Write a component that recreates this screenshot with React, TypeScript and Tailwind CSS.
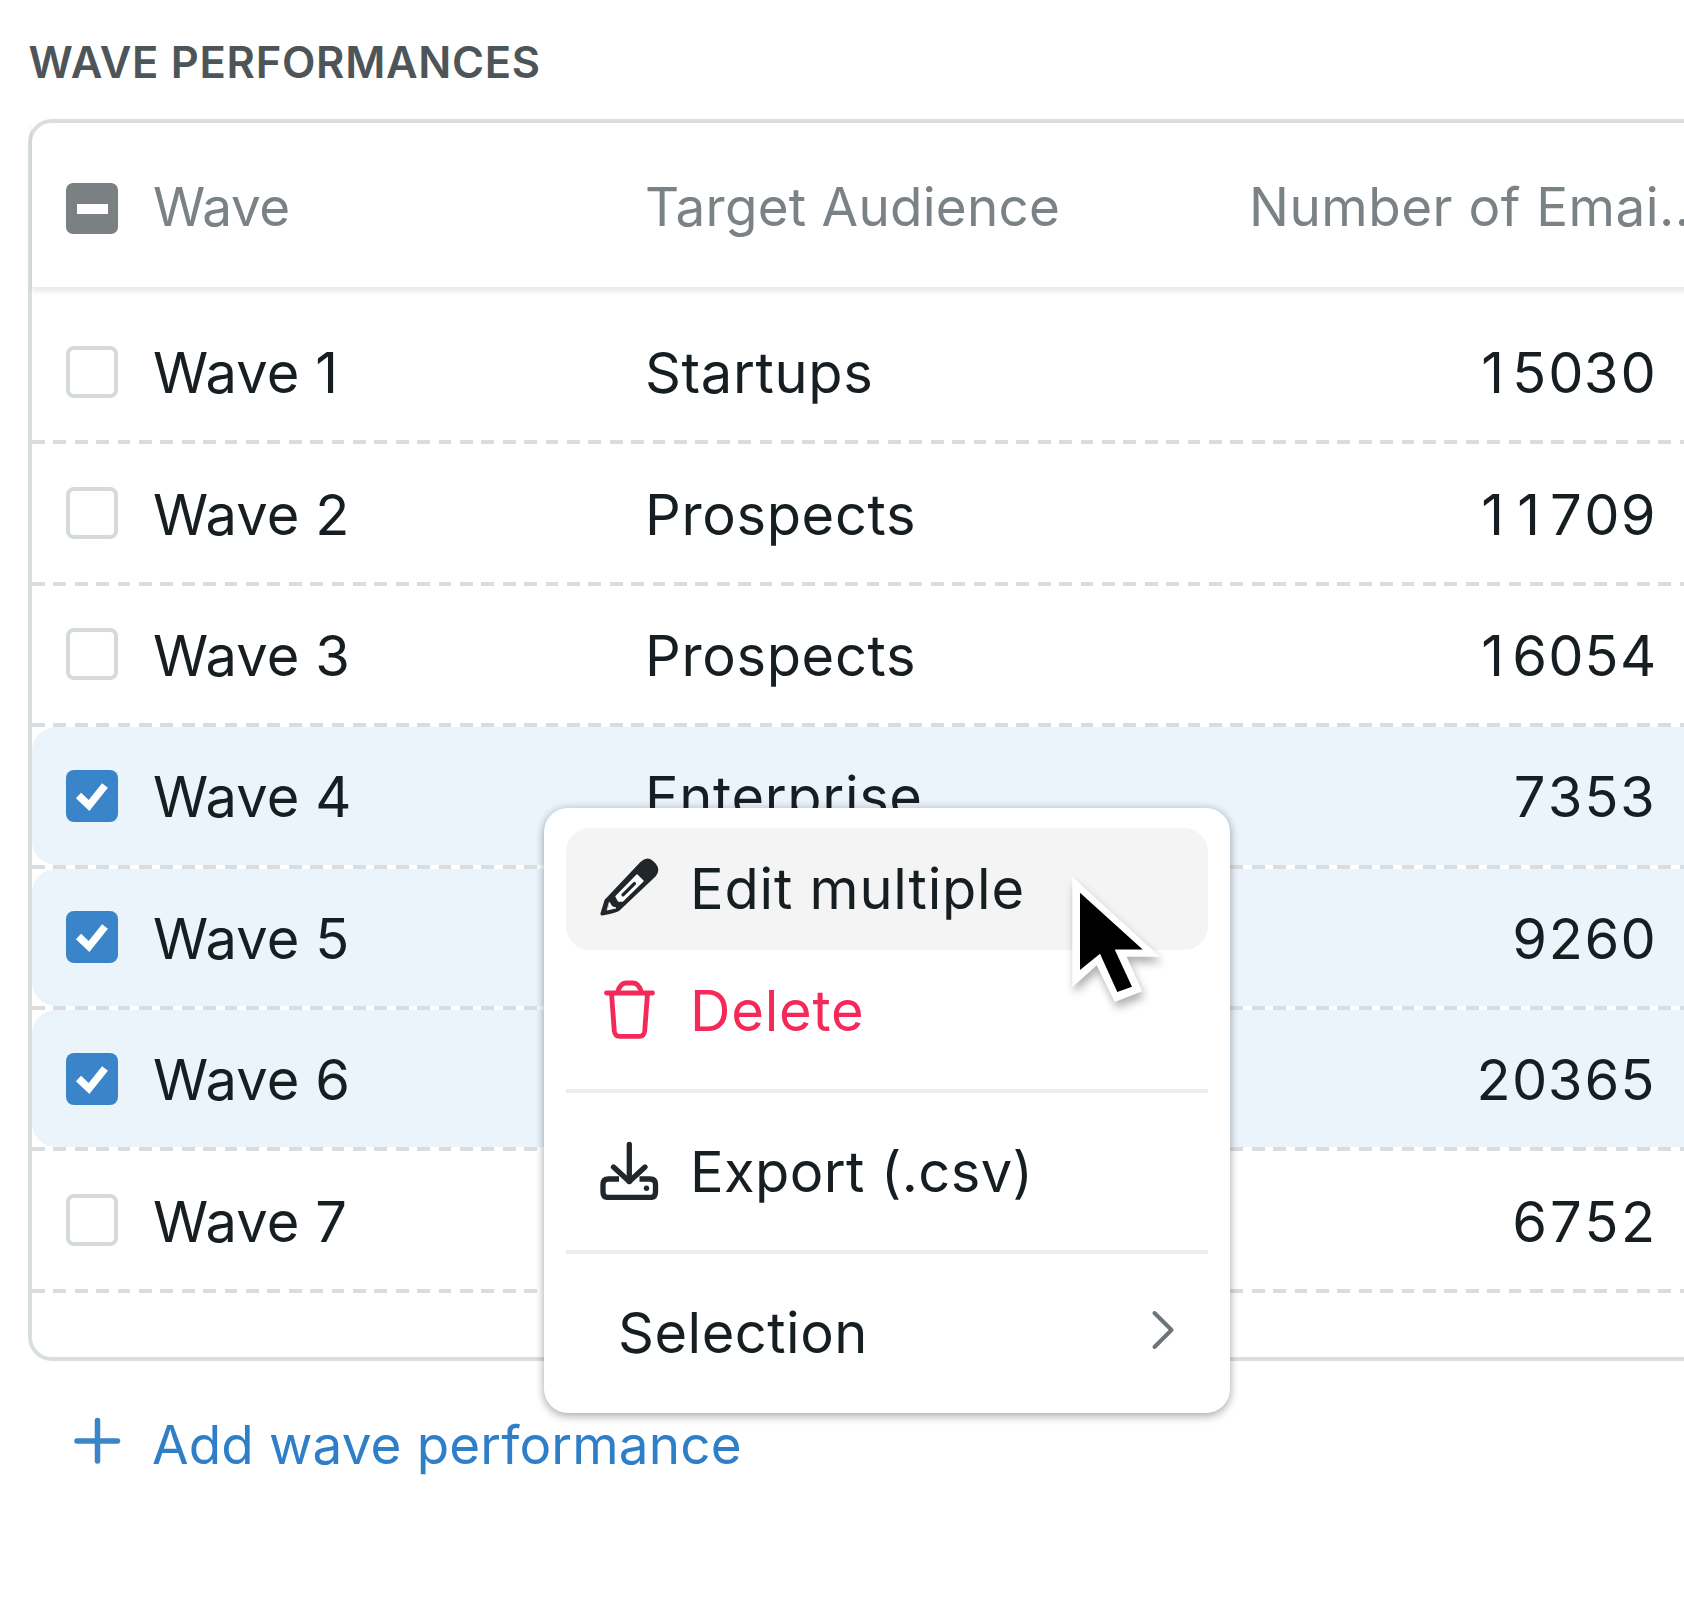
import React from "react";

interface Wave {
  name: string;
  audience: string;
  emails: number;
  checked: boolean;
}

const waves: Wave[] = [
  { name: "Wave 1", audience: "Startups", emails: 15030, checked: false },
  { name: "Wave 2", audience: "Prospects", emails: 11709, checked: false },
  { name: "Wave 3", audience: "Prospects", emails: 16054, checked: false },
  { name: "Wave 4", audience: "Enterprise", emails: 7353, checked: true },
  { name: "Wave 5", audience: "", emails: 9260, checked: true },
  { name: "Wave 6", audience: "", emails: 20365, checked: true },
  { name: "Wave 7", audience: "", emails: 6752, checked: false },
];

const Checkbox: React.FC<{ checked: boolean }> = ({ checked }) =>
  checked ? (
    <div className="size-[52px] shrink-0 rounded-[8px] bg-[#3a85ca]">
      <svg viewBox="0 0 52 52" className="size-full" fill="none">
        <path d="M12.5 25.5 L23 35.5 L39 15.5" stroke="#fff" strokeWidth="7.5" />
      </svg>
    </div>
  ) : (
    <div className="size-[52px] shrink-0 rounded-[8px] border-4 border-[#d5dadc] bg-white" />
  );

const DashedLine = () => (
  <div className="h-[4px] bg-[repeating-linear-gradient(to_right,#d9dddf_0px,#d9dddf_12.8px,#fff_12.8px,#fff_21.4px)]" />
);

// Inter's tabular "1" has a foot, so the plain one is set in a digit-wide slot
const Digits: React.FC<{ value: number }> = ({ value }) => (
  <>
    {String(value)
      .split(/(1)/)
      .filter(Boolean)
      .map((part, i) =>
        part === "1" ? (
          <span key={i} className="inline-block w-[36px] pr-[2px] text-center proportional-nums">
            1
          </span>
        ) : (
          part
        )
      )}
  </>
);

const WaveRow: React.FC<{ wave: Wave }> = ({ wave }) => (
  <div>
    <div
      className={`flex h-[137.4px] items-center rounded-l-[24px] pl-[34px] ${
        wave.checked ? "bg-[#ebf3fb]" : ""
      }`}
    >
      <Checkbox checked={wave.checked} />
      <div className="ml-[35px] w-[492px] pt-[3px] tracking-[0.1px]">{wave.name}</div>
      <div className="w-[559px] pt-[3px] tracking-[0.65px]">{wave.audience}</div>
      <div className="w-[452px] pt-[3px] text-right tracking-[-0.2px] tabular-nums">
        <Digits value={wave.emails} />
      </div>
    </div>
    <DashedLine />
  </div>
);

const PencilIcon = () => (
  <svg viewBox="0 0 60 60" className="size-[60px]" strokeLinejoin="round" strokeLinecap="round">
    <path d="M3 55.500 L7 42.500 L42.500 5 Q48 -0.500 53 4 L55.500 6.500 Q60 12 55.500 17.500 L19.500 51.500 Q17 53.300 3 56 Z" fill="#20262a" stroke="#20262a" strokeWidth="3" />
    <path d="M17 38.500 L38 17 L44 23 L23.500 43 L19.500 43 Z" fill="#fff" stroke="#fff" strokeWidth="1.500" />
    <path d="M24 36.800 L35.500 25.500" fill="none" stroke="#20262a" strokeWidth="3.200" />
    <path d="M10.500 44.500 L13 48.500 L17 50 L8.500 52 Z" fill="#fff" stroke="#fff" strokeWidth="0.800" />
  </svg>
);

const TrashIcon = () => (
  <svg viewBox="0 0 60 60" className="size-[60px]" fill="none" stroke="#f52958" strokeWidth="4.8" strokeLinejoin="round" strokeLinecap="round">
    <path d="M7.500 13 H53.500" />
    <path d="M18.500 12.500 Q21 3 27 3 H34 Q40 3 42.500 12.500" />
    <path d="M12.500 13.500 L15.300 51 Q16 56.300 20.500 56.300 H40.500 Q45 56.300 45.700 51 L48.500 13.500" />
  </svg>
);

const ExportIcon = () => (
  <svg viewBox="0 0 60 60" className="size-[60px]" fill="none" stroke="#20262a" strokeWidth="5.3" strokeLinejoin="round" strokeLinecap="round">
    <path d="M30.300 4.500 V41.500" />
    <path d="M14.500 27 L30.300 41.500 L46 27" />
    <path d="M20 39 H9.500 Q4 39 4 44.500 V52 Q4 57.500 9.500 57.500 H51 Q56.500 57.500 56.500 52 V44.500 Q56.500 39 51 39 H40.500" strokeLinecap="butt" />
    <circle cx="47.500" cy="48.200" r="2.700" fill="#20262a" stroke="none" />
  </svg>
);

interface MenuItemProps {
  label: string;
  icon?: React.ReactNode;
  className?: string;
}

const MenuItem: React.FC<MenuItemProps> = ({ label, icon, className = "" }) => (
  <div className={`flex h-[121.700px] items-center rounded-[24px] pl-[33px] ${className}`}>
    {icon && <div className="-mt-[2px]">{icon}</div>}
    <span className={icon ? "ml-[31px] pt-[1px]" : "ml-[19px] pt-[3px]"}>{label}</span>
  </div>
);

const Separator = () => <div className="my-[17.500px] h-[4px] bg-[#ebedee]" />;

const ContextMenu = () => (
  <div className="absolute top-[808px] left-[544px] w-[686px] rounded-[24px] bg-white px-[22px] py-[20px] shadow-[0_4px_8px_rgba(40,50,60,0.28),0_0_8px_rgba(40,50,60,0.2)]">
    <MenuItem label="Edit multiple" icon={<PencilIcon />} className="bg-[#f4f4f4] tracking-[0.8px]" />
    <MenuItem label="Delete" icon={<TrashIcon />} className="tracking-[0.8px] text-[#f52958]" />
    <Separator />
    <MenuItem label="Export (.csv)" icon={<ExportIcon />} className="tracking-[0.4px]" />
    <Separator />
    <div className="flex items-center justify-between pr-[33px]">
      <MenuItem label="Selection" />
      <svg viewBox="0 0 24 40" className="mb-[4px] h-[40px] w-[24px]" fill="none">
        <path d="M3.500 3 L20.500 20 L3.500 37" stroke="#6d757a" strokeWidth="4" strokeLinecap="round" strokeLinejoin="round" />
      </svg>
    </div>
  </div>
);

const Cursor = () => (
  <svg
    viewBox="0 0 100 140"
    className="absolute top-[870px] left-[1066px] h-[140px] w-[100px] drop-shadow-[2px_6px_4px_rgba(0,0,0,0.3)]"
  >
    <path d="M6.300 6.700 L94 86.700 H60.700 L76.300 121.300 L48.700 132 L30.700 95.300 L6.300 117.300 Z" fill="#fff" />
    <path d="M14 22.700 L76.700 79.500 H48.700 L66 116.700 L51.300 122 L34 83.700 L14 100 Z" fill="#000" />
  </svg>
);

export default function App() {
  return (
    <div className="relative h-[1600px] w-[1684px] overflow-hidden bg-white font-['Inter',sans-serif] text-[56px] leading-none tracking-[0.5px] whitespace-nowrap text-[#171e22] [font-optical-sizing:none]">
      <div className="flex h-[119px] items-center pt-[7px] pl-[28.500px] text-[43.500px] font-[560] tracking-[0.700px] text-[#4d5559]">
        WAVE PERFORMANCES
      </div>

      <div className="ml-[28px] h-[1242px] w-[1720px] rounded-[24px] border-4 border-[#d9dfe1]">
        <div className="flex h-[164px] items-center pl-[34px] text-[53px] text-[#7b8286] shadow-[0_4px_5px_rgba(60,70,80,0.13)]">
          <div className="mt-[7px] flex h-[51px] w-[52px] items-center justify-center rounded-[7px] bg-[#7b8083]">
            <div className="h-[10px] w-[31px] bg-white" />
          </div>
          <div className="ml-[35px] w-[492px] pt-[4px] tracking-[-0.300px]">Wave</div>
          <div className="w-[604px] pt-[4px] tracking-[0.250px]">Target Audience</div>
          <div className="pt-[4px]">Number of Emai...</div>
        </div>
        <div className="pt-[16px]">
          {waves.map((wave) => (
            <WaveRow key={wave.name} wave={wave} />
          ))}
        </div>
      </div>

      <div className="flex h-[168px] items-center pl-[72px] text-[53px] text-[#2f7fc8]">
        <svg viewBox="0 0 50 50" className="mb-[8px] size-[50px]" fill="none" stroke="#3a85ca" strokeWidth="5.500" strokeLinecap="round">
          <path d="M5 25 H45.500 M25.500 4.500 V45" />
        </svg>
        <div className="ml-[30px] tracking-[0.150px]">Add wave performance</div>
      </div>

      <ContextMenu />
      <Cursor />
    </div>
  );
}
